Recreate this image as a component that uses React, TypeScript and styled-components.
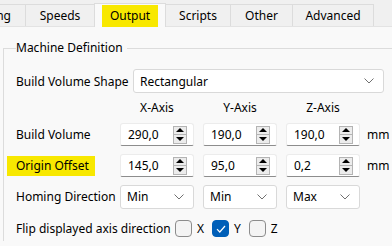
import React from 'react';
import styled, { createGlobalStyle } from 'styled-components';

const GlobalStyle = createGlobalStyle`
  html, body {
    margin: 0;
    padding: 0;
    background: #f0f0f0;
  }
  body {
    font-family: "Noto Sans", "Liberation Sans", sans-serif;
    font-size: 12px;
    color: #000;
  }
`;

const Window = styled.div`
  width: 392px;
  height: 246px;
  overflow: hidden;
  display: flex;
  flex-direction: column;
`;

const TabBar = styled.div`
  display: flex;
  align-items: flex-end;
  height: 27px;
  margin-left: -2px;
  border-bottom: 1px solid #e3e3e3;
  box-sizing: border-box;
`;

const Tab = styled.div<{ $active?: boolean; $w: number; $clipped?: boolean }>`
  width: ${p => p.$w}px;
  height: ${p => (p.$active ? 24 : 22)}px;
  box-sizing: border-box;
  display: flex;
  align-items: center;
  justify-content: ${p => (p.$clipped ? 'flex-end' : 'center')};
  padding-right: ${p => (p.$clipped ? '14px' : '0')};
  background: ${p => (p.$active ? '#f9f9f9' : '#f0f0f0')};
  border: 1px solid #dcdcdc;
  border-bottom: none;
  margin-left: -1px;
  margin-bottom: ${p => (p.$active ? '-1px' : '0')};
  position: relative;
  z-index: ${p => (p.$active ? 1 : 0)};
  white-space: nowrap;
  overflow: hidden;
`;

const Highlight = styled.span`
  background: #f8e800;
  padding: 2px 8px 3px 8px;
`;

const Pane = styled.div`
  flex: 1;
  background: #f9f9f9;
  padding: 13px 0 0 3px;
`;

const Group = styled.fieldset`
  margin: 0;
  padding: 10px 0 0 12px;
  border: none;
  border-top: 1px solid #dcdcdc;
  border-left: 1px solid #dcdcdc;
  min-width: 0;
`;

const Legend = styled.legend`
  padding: 0 4px 0 0;
  line-height: 16px;
`;

const ShapeRow = styled.div`
  display: flex;
  align-items: center;
  height: 24px;
  margin-top: 3px;
`;

const Label = styled.div<{ $marked?: boolean }>`
  white-space: nowrap;
  ${p =>
    p.$marked &&
    `
    background: #f8e800;
    margin-left: -9px;
    padding: 1px 6px 2px 9px;
    justify-self: start;
  `}
`;

const Form = styled.div`
  display: grid;
  grid-template-columns: 95px 74px 74px 74px auto;
  grid-auto-rows: 23px;
  grid-template-rows: 16px;
  column-gap: 9px;
  row-gap: 8px;
  align-items: center;
  margin-top: 6px;
`;

const Header = styled.div`
  text-align: center;
`;

const Unit = styled.div`
  margin-left: -2px;
`;

const SpinBox = styled.div`
  height: 23px;
  box-sizing: border-box;
  background: #fff;
  border: 1px solid #ececec;
  border-bottom: 1px solid #8d8d8d;
  border-radius: 3px 3px 2px 2px;
  display: flex;
  align-items: center;
  padding: 0 6px 0 7px;
`;

const SpinValue = styled.span`
  flex: 1;
`;

const SpinButtons = styled.div`
  width: 14px;
  height: 18px;
  box-sizing: border-box;
  border: 1px solid #b4b4b4;
  background: #ececec;
  display: flex;
  flex-direction: column;
`;

const SpinHalf = styled.div<{ $top?: boolean }>`
  flex: 1;
  display: flex;
  align-items: center;
  justify-content: center;
  border-bottom: ${p => (p.$top ? '1px solid #b4b4b4' : 'none')};
`;

const Combo = styled.div<{ $w?: number }>`
  height: 24px;
  box-sizing: border-box;
  width: ${p => (p.$w ? `${p.$w}px` : 'auto')};
  background: #fff;
  border: 1px solid #d9d9d9;
  border-radius: 3px;
  display: flex;
  align-items: center;
  padding: 0 9px 0 6px;
`;

const ComboText = styled.span`
  flex: 1;
`;

const FlipRow = styled.div`
  display: flex;
  align-items: center;
  height: 25px;
  margin-top: 8px;
`;

const CheckGroup = styled.div`
  display: flex;
  align-items: center;
  gap: 5px;
  margin-right: 8px;
`;

const Box = styled.div<{ $checked?: boolean }>`
  width: 17px;
  height: 17px;
  box-sizing: border-box;
  border-radius: 4px;
  border: 1px solid ${p => (p.$checked ? '#005fb8' : '#8c8c8c')};
  background: ${p => (p.$checked ? '#005fb8' : '#f4f4f4')};
  display: flex;
  align-items: center;
  justify-content: center;
`;

const Arrow = ({ up }: { up?: boolean }) => (
  <svg width="8" height="4" viewBox="0 0 8 4">
    <path d={up ? 'M0 4 L4 0 L8 4 Z' : 'M0 0 L4 4 L8 0 Z'} fill="#000" />
  </svg>
);

const Chevron = () => (
  <svg width="10" height="6" viewBox="0 0 10 6">
    <path d="M0.5 0.5 L5 5 L9.5 0.5" fill="none" stroke="#707070" strokeWidth="1" />
  </svg>
);

const Spin = ({ value }: { value: string }) => (
  <SpinBox>
    <SpinValue>{value}</SpinValue>
    <SpinButtons>
      <SpinHalf $top>
        <Arrow up />
      </SpinHalf>
      <SpinHalf>
        <Arrow />
      </SpinHalf>
    </SpinButtons>
  </SpinBox>
);

const Select = ({ value, w }: { value: string; w?: number }) => (
  <Combo $w={w}>
    <ComboText>{value}</ComboText>
    <Chevron />
  </Combo>
);

const Check = ({ label, checked }: { label: string; checked?: boolean }) => (
  <CheckGroup>
    <Box $checked={checked}>
      {checked && (
        <svg width="10" height="8" viewBox="0 0 10 8">
          <path d="M1 4.2 L3.8 7 L9 1" fill="none" stroke="#fff" strokeWidth="1.2" />
        </svg>
      )}
    </Box>
    <span>{label}</span>
  </CheckGroup>
);

const tabs = [
  { name: 'ng', w: 29, clipped: true },
  { name: 'Speeds', w: 70 },
  { name: 'Output', w: 72, active: true },
  { name: 'Scripts', w: 66 },
  { name: 'Other', w: 63 },
  { name: 'Advanced', w: 82 },
];

export default function App() {
  return (
    <Window>
      <GlobalStyle />
      <TabBar>
        {tabs.map(t => (
          <Tab key={t.name} $w={t.w} $active={t.active} $clipped={t.clipped}>
            {t.active ? <Highlight>{t.name}</Highlight> : t.name}
          </Tab>
        ))}
      </TabBar>
      <Pane>
        <Group>
          <Legend>Machine Definition</Legend>
          <ShapeRow>
            <Label style={{ width: 117 }}>Build Volume Shape</Label>
            <Select value="Rectangular" w={251} />
          </ShapeRow>
          <Form>
            <div />
            <Header>X-Axis</Header>
            <Header>Y-Axis</Header>
            <Header>Z-Axis</Header>
            <div />

            <Label>Build Volume</Label>
            <Spin value="290,0" />
            <Spin value="190,0" />
            <Spin value="190,0" />
            <Unit>mm</Unit>

            <Label $marked>Origin Offset</Label>
            <Spin value="145,0" />
            <Spin value="95,0" />
            <Spin value="0,2" />
            <Unit>mm</Unit>

            <Label>Homing Direction</Label>
            <Select value="Min" />
            <Select value="Min" />
            <Select value="Max" />
            <div />
          </Form>
          <FlipRow>
            <Label style={{ width: 159 }}>Flip displayed axis direction</Label>
            <Check label="X" />
            <Check label="Y" checked />
            <Check label="Z" />
          </FlipRow>
        </Group>
      </Pane>
    </Window>
  );
}
